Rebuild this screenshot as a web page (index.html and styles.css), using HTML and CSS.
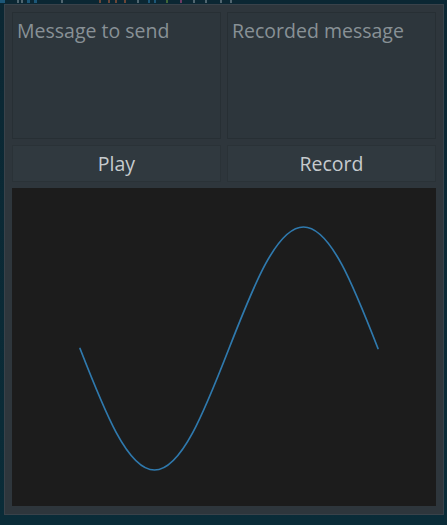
FILE: index.html
```html
<!DOCTYPE html>
<html>
<head>
<meta charset="utf-8">
<title>Message recorder</title>
<link rel="stylesheet" href="styles.css">
</head>
<body>
<div class="backdrop">
  <div class="termline">
    <span class="t t-blue w5"></span><span class="t t-white g12"></span><span class="t t-white g2"></span><span class="t t-blue g4 w3"></span><span class="t t-blue g4 w3"></span><span class="t t-white g24"></span>
    <span class="t t-orange g36"></span><span class="t t-orange g7"></span><span class="t t-orange g5"></span><span class="t t-orange g7"></span><span class="t t-white g11"></span>
    <span class="t t-blue g9"></span><span class="t t-blue g4"></span><span class="t t-green g10"></span><span class="t t-pink g12"></span><span class="t t-white g11"></span><span class="t t-white g10"></span><span class="t t-white g13"></span><span class="t t-white g8"></span>
  </div>
  <div class="window">
    <div class="fields">
      <div class="field"><span class="placeholder">Message to send</span></div>
      <div class="field"><span class="placeholder">Recorded message</span></div>
    </div>
    <div class="buttons">
      <button class="btn">Play</button>
      <button class="btn">Record</button>
    </div>
    <div class="scope">
      <svg width="424" height="318" viewBox="0 0 424 318" class="wave">
        <path d="M68 160.5 C92.3 222.74 115.54 282 142.5 282 C169.46 282 192.7 222.74 217 160.5 C241.3 98.26 264.54 39 291.5 39 C318.46 39 341.7 98.26 366 160.5" fill="none" stroke="#2f79ad" stroke-width="1.7" stroke-linecap="round"/>
      </svg>
    </div>
  </div>
</div>
</body>
</html>
```
FILE: styles.css
```css
html, body {
  margin: 0;
  padding: 0;
}
body {
  width: 447px;
  height: 525px;
  background: #0b2935;
  font-family: "Open Sans", "Noto Sans", sans-serif;
  overflow: hidden;
}
.backdrop {
  width: 447px;
  height: 525px;
  background: linear-gradient(#0b2733, #0a2c38);
}
.termline {
  height: 4px;
  display: flex;
  align-items: flex-start;
  overflow: hidden;
}
.t {
  display: block;
  width: 2px;
  height: 3px;
  opacity: 0.55;
}
.t-blue { background: #2c7fb0; }
.t-white { background: #8a9aa3; }
.t-orange { background: #c0613a; }
.t-green { background: #6e9a3a; }
.t-pink { background: #c04a8a; }
.w5 { width: 5px; }
.w3 { width: 3px; }
.g2 { margin-left: 2px; }
.g4 { margin-left: 4px; }
.g5 { margin-left: 5px; }
.g7 { margin-left: 7px; }
.g8 { margin-left: 8px; }
.g9 { margin-left: 9px; }
.g10 { margin-left: 10px; }
.g11 { margin-left: 11px; }
.g12 { margin-left: 12px; }
.g13 { margin-left: 13px; }
.g24 { margin-left: 24px; }
.g36 { margin-left: 36px; }

.window {
  margin-left: 4px;
  width: 424px;
  height: 495px;
  padding: 7px;
  background: #2e363c;
  border: 1px solid #39424a;
  display: flex;
  flex-direction: column;
  gap: 6px;
}
.fields {
  display: flex;
  gap: 6px;
  height: 127px;
}
.field {
  flex: 1;
  background: #2d363c;
  border: 1px solid #272f34;
  padding: 5px 4px 0 4px;
  box-sizing: border-box;
}
.placeholder {
  color: #889196;
  font-size: 19.5px;
  line-height: 26px;
}
.buttons {
  display: flex;
  gap: 6px;
  height: 37px;
}
.btn {
  flex: 1;
  background: #30393f;
  border: 1px solid #2a3237;
  color: #c6cbce;
  font-family: "Open Sans", "Noto Sans", sans-serif;
  font-size: 19.5px;
  padding: 0;
  margin: 0;
}
.scope {
  height: 318px;
  background: #1c1c1c;
}
.wave {
  display: block;
}
```
